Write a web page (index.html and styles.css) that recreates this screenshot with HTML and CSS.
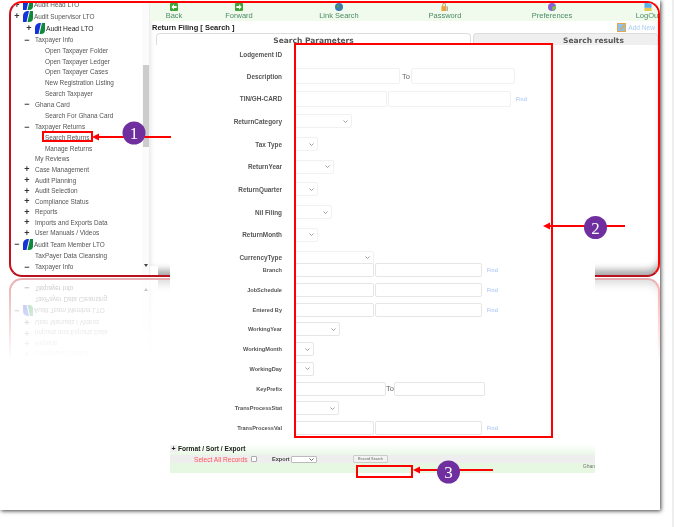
FILE: index.html
```html
<!DOCTYPE html>
<html lang="en">
<head>
    <meta charset="UTF-8">
    <title>Return Filing</title>
    <link rel="stylesheet" href="styles.css">
</head>
<body>
    <div class="desk">
        <div class="paper">
            <div class="screen">
                <!-- left tree menu -->
                <nav class="sidebar">
                    <div class="tree">
                        <div class="node node-org"><span class="sign">+</span><svg class="org-icon" viewBox="0 0 10 11"><path d="M0 11V5Q0 1 4 0H6L3.500 11Z" fill="#1533d8"/><path d="M4.500 11 7 0H10V7Q10 11 6 11Z" fill="#0f8a3c"/></svg>Audit Head LTO</div>
                        <div class="node node-org"><span class="sign">+</span><svg class="org-icon" viewBox="0 0 10 11"><path d="M0 11V5Q0 1 4 0H6L3.500 11Z" fill="#1533d8"/><path d="M4.500 11 7 0H10V7Q10 11 6 11Z" fill="#0f8a3c"/></svg>Audit Supervisor LTO</div>
                        <div class="node node-sub"><span class="sign">+</span><svg class="org-icon" viewBox="0 0 10 11"><path d="M0 11V5Q0 1 4 0H6L3.500 11Z" fill="#1533d8"/><path d="M4.500 11 7 0H10V7Q10 11 6 11Z" fill="#0f8a3c"/></svg>Audit Head LTO</div>
                        <div class="node node-group tall"><span class="sign">&minus;</span>Taxpayer Info</div>
                        <div class="node node-leaf">Open Taxpayer Folder</div>
                        <div class="node node-leaf">Open Taxpayer Ledger</div>
                        <div class="node node-leaf">Open Taxpayer Cases</div>
                        <div class="node node-leaf">New Registration Listing</div>
                        <div class="node node-leaf">Search Taxpayer</div>
                        <div class="node node-group tall"><span class="sign">&minus;</span>Ghana Card</div>
                        <div class="node node-leaf tall">Search For Ghana Card</div>
                        <div class="node node-group tall"><span class="sign">&minus;</span>Taxpayer Returns</div>
                        <div class="node node-leaf">Search Returns</div>
                        <div class="node node-leaf">Manage Returns</div>
                        <div class="node node-plain">My Reviews</div>
                        <div class="node node-group"><span class="sign">+</span>Case Management</div>
                        <div class="node node-group"><span class="sign">+</span>Audit Planning</div>
                        <div class="node node-group"><span class="sign">+</span>Audit Selection</div>
                        <div class="node node-group"><span class="sign">+</span>Compliance Status</div>
                        <div class="node node-group"><span class="sign">+</span>Reports</div>
                        <div class="node node-group"><span class="sign">+</span>Imports and Exports Data</div>
                        <div class="node node-group"><span class="sign">+</span>User Manuals / Videos</div>
                        <div class="node node-org taller"><span class="sign">&minus;</span><svg class="org-icon" viewBox="0 0 10 11"><path d="M0 11V5Q0 1 4 0H6L3.500 11Z" fill="#1533d8"/><path d="M4.500 11 7 0H10V7Q10 11 6 11Z" fill="#0f8a3c"/></svg>Audit Team Member LTO</div>
                        <div class="node node-plain tall">TaxPayer Data Cleansing</div>
                        <div class="node node-group"><span class="sign">&minus;</span>Taxpayer Info</div>
                    </div>
                    <div class="vscroll">
                        <div class="vthumb"></div>
                        <div class="varrow"></div>
                    </div>
                </nav>

                <main class="content">
                    <div class="toolbar">
                        <div class="tool tool-back">
                            <svg class="tool-icon" viewBox="0 0 9 9"><rect width="9" height="9" rx="1" fill="#3fa535"/><path d="M1.500 4.500 4.500 1.500V3.500H7.500V5.500H4.500V7.500Z" fill="#fff"/></svg>
                            Back
                        </div>
                        <div class="tool tool-forward">
                            <svg class="tool-icon" viewBox="0 0 9 9"><rect width="9" height="9" rx="1" fill="#3fa535"/><path d="M7.500 4.500 4.500 1.500V3.500H1.500V5.500H4.500V7.500Z" fill="#fff"/></svg>
                            Forward
                        </div>
                        <div class="tool tool-link">
                            <svg class="tool-icon" viewBox="0 0 9 9"><circle cx="4.500" cy="4.500" r="4.500" fill="#3c78b8"/><path d="M2 1.500 5 3 4 6 2 5ZM6 5.500 8 5 7 8Z" fill="#4aa04a"/></svg>
                            Link Search
                        </div>
                        <div class="tool tool-password">
                            <svg class="tool-icon" viewBox="0 0 9 9"><path d="M2 3.500V2Q2 0 3.500 0T5 2V3.500" fill="none" stroke="#b08a50"/><rect x="0.500" y="3.500" width="5.500" height="5.500" fill="#eda33c"/><path d="M7 4V9" stroke="#999" stroke-width="1.200"/></svg>
                            Password
                        </div>
                        <div class="tool tool-prefs">
                            <svg class="tool-icon" viewBox="0 0 9 9"><circle cx="4.500" cy="4.500" r="4.500" fill="#8a5fd0"/><path d="M4.500 4.500 9 3V6L5 9Z" fill="#7cc04a"/></svg>
                            Preferences
                        </div>
                        <div class="tool tool-logout">
                            <svg class="tool-icon" viewBox="0 0 9 9"><rect x="0.500" width="8" height="5.500" fill="#5ab0e8"/><rect x="0.500" y="5.500" width="8" height="3.500" fill="#e8c94a"/></svg>
                            LogOut
                        </div>
                    </div>

                    <div class="title-row">
                        <h1 class="page-title">Return Filing [ Search ]</h1>
                        <div class="add-new">
                            <svg class="add-icon" viewBox="0 0 9 9"><rect x="0.500" y="0.500" width="8" height="8" fill="#8cc4ee" stroke="#e8a548"/><path d="M3 6 7 1.500 8 2.500 4 7Z" fill="#e8a548"/></svg>
                            Add New
                        </div>
                    </div>

                    <div class="tabs">
                        <div class="tab tab-active">Search Parameters</div>
                        <div class="tab tab-other">Search results</div>
                    </div>

                    <form class="params">
                        <div class="row row-first"><label>Lodgement ID</label></div>
                        <div class="row"><label>Description</label><input class="w105"><span class="to to-wide">To</span><input class="w104"></div>
                        <div class="row"><label>TIN/GH-CARD</label><input class="w92"><input class="w123 next"><a class="find">Find</a></div>
                        <div class="row"><label>ReturnCategory</label><select class="w57"></select></div>
                        <div class="row"><label>Tax Type</label><select class="w23"></select></div>
                        <div class="row"><label>ReturnYear</label><select class="w39"></select></div>
                        <div class="row"><label>ReturnQuarter</label><select class="w23"></select></div>
                        <div class="row"><label>Nil Filing</label><select class="w37"></select></div>
                        <div class="row"><label>ReturnMonth</label><select class="w23"></select></div>
                        <div class="row"><label>CurrencyType</label><select class="w79"></select></div>
                        <div class="row row-low row-branch"><label>Branch</label><input class="w79"><input class="w107 next"><a class="find">Find</a></div>
                        <div class="row row-low"><label>JobSchedule</label><input class="w79"><input class="w107 next"><a class="find">Find</a></div>
                        <div class="row row-low"><label>Entered By</label><input class="w79"><input class="w107 next"><a class="find">Find</a></div>
                        <div class="row row-low"><label>WorkingYear</label><select class="w45"></select></div>
                        <div class="row row-low"><label>WorkingMonth</label><select class="w19"></select></div>
                        <div class="row row-low"><label>WorkingDay</label><select class="w19"></select></div>
                        <div class="row row-low"><label>KeyPrefix</label><input class="w91"><span class="to">To</span><input class="w91"></div>
                        <div class="row row-low"><label>TransProcessStat</label><select class="w44"></select></div>
                        <div class="row row-low"><label>TransProcessVal</label><input class="w79"><input class="w107 next"><a class="find">Find</a></div>
                    </form>

                    <section class="format">
                        <div class="format-head"><span class="expand">+</span>Format / Sort / Export</div>
                        <div class="format-bar">
                            <span class="select-all">Select All Records</span>
                            <input type="checkbox" class="check">
                            <span class="export">Export</span>
                            <select class="export-sel"></select>
                            <button type="button" class="search-btn">Record Search</button>
                        </div>
                        <div class="format-foot">Ghan</div>
                    </section>

                    <div class="hcorner"></div>
                </main>
            </div>
        </div>

        <!-- red callouts drawn on top of the screenshot -->
        <svg class="callouts" viewBox="0 0 674 527">
            <g fill="none" stroke="#f00" stroke-width="2">
                <rect x="43" y="132" width="49" height="9"/>
                <rect x="295" y="44" width="257" height="393"/>
                <rect x="357" y="466" width="55" height="11"/>
                <path d="M97 137H171M549 226H625M418 470H493"/>
            </g>
            <g fill="#f00">
                <path d="M92 137 99 133.500V140.500Z"/>
                <path d="M543 226 550 222.500V229.500Z"/>
                <path d="M413 470 420 466.500V473.500Z"/>
            </g>
            <g fill="#6f2f9f">
                <circle cx="134" cy="133" r="11.500"/>
                <circle cx="595.500" cy="227.500" r="11.500"/>
                <circle cx="448.500" cy="472" r="11.500"/>
            </g>
            <g class="callout-num">
                <text x="134" y="139">1</text>
                <text x="595.500" y="233.500">2</text>
                <text x="448.500" y="478">3</text>
            </g>
        </svg>
    </div>
</body>
</html>
```

FILE: styles.css
```css
body {
    margin: 0;
    background: #fff;
    font-family: "Liberation Sans", Arial, sans-serif;
}

.desk {
    position: relative;
    width: 674px;
    height: 527px;
    box-sizing: border-box;
    border-right: 2px solid #eee;
    overflow: hidden;
}

.paper {
    width: 660px;
    height: 510px;
    padding-top: 1px;
    box-sizing: border-box;
    background: #fff;
    box-shadow: 1px 1px 4px rgba(0, 0, 0, 0.75);
}

/* framed application window */
.screen {
    display: flex;
    width: 651px;
    height: 276px;
    margin-left: 9px;
    box-sizing: border-box;
    background: #fff;
    border: 2px solid #f00;
    border-left-color: #c8101a;
    border-bottom-color: #b8101c;
    border-radius: 13px;
    -webkit-box-reflect: below 1px linear-gradient(to bottom, transparent 70%, rgba(255, 255, 255, 0.35));
}

/* tree menu */
.sidebar {
    display: flex;
    flex: 0 0 139px;
    height: 272px;
    overflow: hidden;
    border-radius: 11px 0 0 11px;
    filter: blur(0.4px);
}

.tree {
    flex: 1;
    margin-top: -4px;
    font-size: 6.4px;
    color: #555;
    white-space: nowrap;
}

.node {
    display: flex;
    align-items: center;
    height: 10.6px;
}

.tall { height: 11.3px; }
.taller { height: 12px; }

.node-org { height: 11.6px; padding-left: 2px; }
.node-org.taller { height: 12px; }
.node-sub { height: 12px; padding-left: 14px; font-size: 6.7px; color: #222; }
.node-group { padding-left: 12px; }
.node-leaf { padding-left: 34px; }
.node-plain { padding-left: 24px; }

.sign {
    flex: none;
    width: 8px;
    margin-right: 4px;
    text-align: center;
    font-size: 9px;
    font-weight: bold;
    color: #333;
}

.node-org .sign,
.node-sub .sign {
    margin-right: 2px;
}

.org-icon {
    flex: none;
    width: 10px;
    height: 11px;
    margin-right: 1px;
}

.vscroll {
    flex: 0 0 8px;
    border-right: 1px solid #eee;
    box-sizing: border-box;
    background: #fbfbfb;
}

.vthumb {
    width: 6px;
    height: 82px;
    margin: 62px 0 0 1px;
    background: #ccc;
}

.varrow {
    width: 0;
    margin: 117px 0 0 2px;
    border: 2px solid transparent;
    border-top: 3px solid #444;
}

/* right side */
.content {
    position: relative;
    flex: 1;
    min-width: 0;
    box-shadow: inset 0 -8px 7px -3px rgba(0, 0, 0, 0.35);
    border-radius: 0 0 11px 0;
    filter: blur(0.4px);
}

.toolbar {
    display: flex;
    height: 18px;
    overflow: hidden;
    background: #f0fbee;
    border-radius: 0 11px 0 0;
    font-size: 7.5px;
    color: #4c8a63;
}

.tool {
    display: flex;
    flex-direction: column;
    align-items: center;
    flex: none;
    white-space: nowrap;
    line-height: 9px;
}

.tool-back { width: 48px; }
.tool-forward { width: 82px; }
.tool-link { width: 118px; }
.tool-password { width: 94px; }
.tool-prefs { width: 120px; }
.tool-logout { width: 72px; }

.tool-icon {
    width: 8px;
    height: 8px;
    flex: none;
}

.title-row {
    display: flex;
    justify-content: space-between;
    align-items: center;
    height: 12px;
    padding: 0 3px 0 2px;
}

.page-title {
    margin: 0;
    font-size: 7.5px;
    color: #222;
}

.add-new {
    display: flex;
    align-items: center;
    gap: 2px;
    font-size: 6.6px;
    color: #a9cdf2;
}

.add-icon {
    width: 9px;
    height: 9px;
}

.tabs {
    display: flex;
    gap: 2px;
    height: 12px;
    margin-left: 6px;
    font-family: "DejaVu Sans", Verdana, sans-serif;
    font-size: 7.5px;
    font-weight: bold;
    color: #555;
}

.tab {
    box-sizing: border-box;
    padding-top: 2px;
    text-align: center;
    border-radius: 4px 4px 0 0;
    border-top: 1px solid #ddd;
    border-left: 1px solid #ddd;
    border-right: 1px solid #ddd;
    white-space: nowrap;
}

.tab-active { width: 315px; background: #fff; }
.tab-other { width: 185px; padding-left: 56px; background: #efefef; }

/* white form sheet, runs past the bottom of the window */
.params {
    width: 425px;
    margin-left: 20px;
    background: #fff;
    font-size: 6.4px;
}

.row {
    display: flex;
    align-items: center;
    height: 22.7px;
}

.row-first { height: 19.7px; }

.row-low {
    height: 19.75px;
    font-size: 5.6px;
}

.row-branch {
    position: relative;
    margin-top: -8.6px;
}

.row label {
    flex: none;
    width: 112px;
    margin-right: 13px;
    text-align: right;
    font-weight: bold;
    color: #555;
}

.row input,
.row select {
    flex: none;
    height: 14px;
    margin: 0;
    padding: 0;
    box-sizing: border-box;
    background-color: #fff;
    border: 1px solid #f1f1f1;
    border-radius: 2px;
    font-size: 6px;
}

.row input {
    height: 16px;
}

.row-low input {
    height: 14px;
}

.row select {
    appearance: none;
    background-image: url("data:image/svg+xml,%3Csvg xmlns='http://www.w3.org/2000/svg' viewBox='0 0 5 3'%3E%3Cpath d='M.5.5 2.500 2.500 4.500.5' fill='none' stroke='%23888' stroke-width='.8'/%3E%3C/svg%3E");
    background-repeat: no-repeat;
    background-size: 5px 3px;
    background-position: right 3px center;
}

.row-low input,
.row-low select {
    border-color: #e6e6e6;
}

.next { margin-left: 1px !important; }

.w19 { width: 19px; }
.w23 { width: 23px; }
.w37 { width: 37px; }
.w39 { width: 39px; }
.w44 { width: 44px; }
.w45 { width: 45px; }
.w57 { width: 57px; }
.w79 { width: 79px; }
.w91 { width: 91px; }
.w92 { width: 92px; }
.w104 { width: 104px; }
.w105 { width: 105px; }
.w107 { width: 107px; }
.w123 { width: 123px; }

.to {
    flex: none;
    width: 8px;
    font-size: 7.5px;
    font-weight: normal;
    color: #666;
}

.to-wide {
    width: 9px;
    margin-left: 2px;
}

.find {
    margin-left: 5px;
    font-size: 5.5px;
    color: #9dbdf0;
}

.format {
    width: 425px;
    margin: 6px 0 0 20px;
    background: #fff;
}

.format-head {
    display: flex;
    align-items: center;
    height: 11px;
    padding-bottom: 3px;
    box-sizing: border-box;
    background: linear-gradient(to bottom, #fff, #e9f9e6);
    font-size: 6.6px;
    font-weight: bold;
    color: #222;
}

.expand {
    width: 7px;
    margin-right: 1px;
    background: #f0f0f0;
    text-align: center;
    font-size: 7px;
}

.format-bar {
    display: flex;
    align-items: center;
    height: 8px;
    background: #eee;
    font-size: 6.8px;
    color: #444;
}

.select-all {
    width: 53px;
    margin-left: 24px;
    white-space: nowrap;
    font-size: 6.6px;
    color: #f55;
}

.check {
    appearance: none;
    width: 6px;
    height: 6px;
    margin: 0 0 0 4px;
    background: #fff;
    border: 1px solid #aaa;
    border-radius: 1px;
}

.export {
    width: 17px;
    margin-left: 15px;
    font-weight: bold;
    font-size: 5.6px;
}

.export-sel {
    appearance: none;
    width: 26px;
    height: 7px;
    margin-left: 2px;
    padding: 0;
    background: #fff url("data:image/svg+xml,%3Csvg xmlns='http://www.w3.org/2000/svg' viewBox='0 0 5 3'%3E%3Cpath d='M.5.5 2.500 2.500 4.500.5' fill='none' stroke='%23444' stroke-width='.8'/%3E%3C/svg%3E") no-repeat right 2px center / 5px 3px;
    border: 1px solid #bbb;
    border-radius: 1px;
}

.search-btn {
    width: 35px;
    height: 8px;
    margin-left: 36px;
    padding: 0;
    border: 1px solid #ccc;
    border-radius: 1px;
    background: #f2f2f2;
    font-family: inherit;
    font-size: 3.8px;
    color: #666;
}

.format-foot {
    height: 10px;
    background: #e6f7e2;
    overflow: hidden;
    text-align: right;
    font-size: 5px;
    line-height: 7px;
    color: #777;
}

.hcorner {
    position: absolute;
    left: 0;
    bottom: 0;
    width: 8px;
    height: 9px;
    background: #fff;
}

.callouts {
    position: absolute;
    left: 0;
    top: 0;
    width: 674px;
    height: 527px;
}

.callout-num {
    font-family: "Liberation Serif", serif;
    font-size: 17px;
    fill: #fff;
    text-anchor: middle;
}
```
